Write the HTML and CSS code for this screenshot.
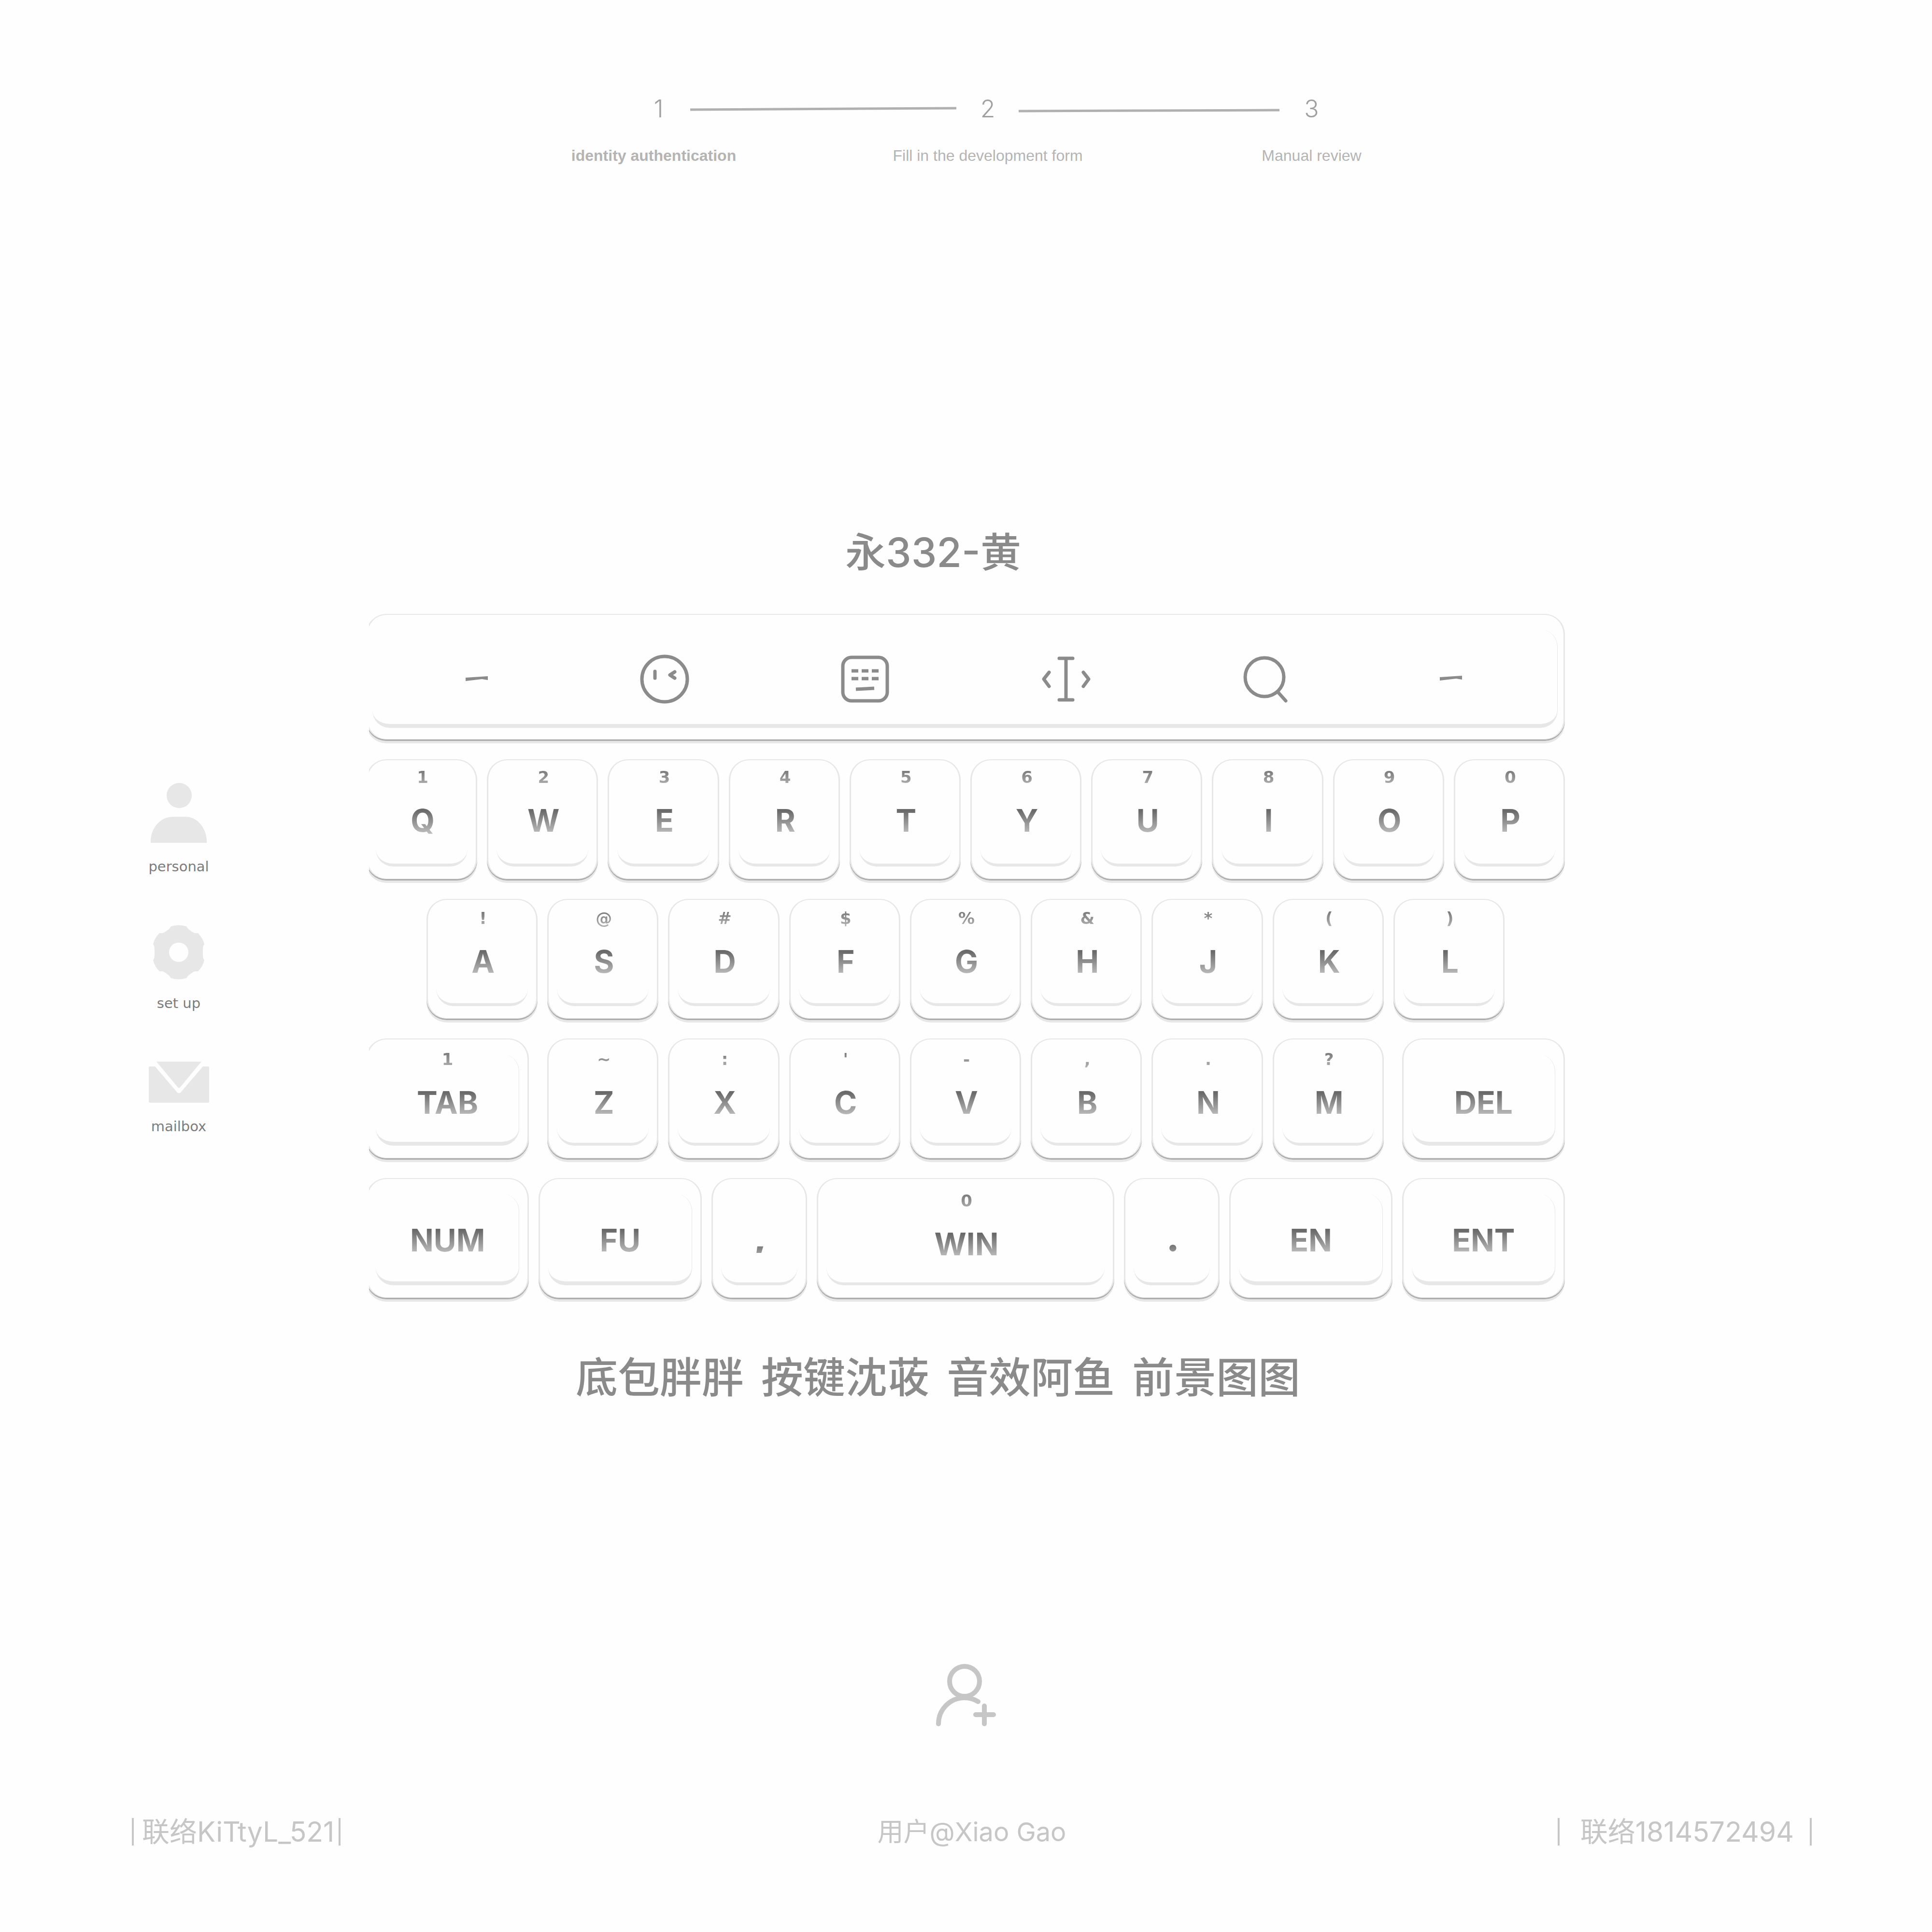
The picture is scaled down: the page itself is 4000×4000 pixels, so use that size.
FILE: index.html
```html
<!DOCTYPE html>
<html lang="zh-CN">
<head>
<meta charset="utf-8">
<title>永332-黄</title>
<link rel="stylesheet" href="styles.css">
</head>
<body>
<header class="steps">
  <span class="num num-1">1</span>
  <svg class="link link-1" viewBox="0 0 551 10" preserveAspectRatio="none"><path d="M0 7L551 4"/></svg>
  <span class="num num-2">2</span>
  <svg class="link link-2" viewBox="0 0 540 10" preserveAspectRatio="none"><path d="M0 10L540 8"/></svg>
  <span class="num num-3">3</span>
  <span class="label label-1">identity authentication</span>
  <span class="label label-2">Fill in the development form</span>
  <span class="label label-3">Manual review</span>
</header>

<main class="stage">
  <h1 class="title">永332-黄</h1>

  <nav class="side">
    <a class="side-item" href="#personal">
      <svg width="116" height="124" viewBox="0 0 116 124"><circle cx="59" cy="26" r="26"/><path d="M0 124V118C2 90 22 70 46 70H72C96 70 114 92 116 118V124Z"/></svg>
      <span>personal</span>
    </a>
    <a class="side-item" href="#setup">
      <svg width="108" height="113" viewBox="0 0 108 113"><path fill-rule="evenodd" d="M38 3Q54 -2 70 3C72 6 73 8 76 10Q81 14 87 17H94Q104 27 107 40C104 44 104 47 104 56.500C104 66 104 69 107 73Q104 86 94 96H87Q81 99 76 103C73 105 72 107 70 110Q54 115 38 110C36 107 35 105 32 103Q27 99 21 96H14Q4 86 1 73C4 69 4 66 4 56.500C4 47 4 44 1 40Q4 27 14 17H21Q27 14 32 10C35 8 36 6 38 3ZM54 36.500A20 20 0 1 0 54 76.500A20 20 0 1 0 54 36.500Z"/></svg>
      <span>set up</span>
    </a>
    <a class="side-item" href="#mailbox">
      <svg width="125" height="85" viewBox="0 0 125 85"><path d="M16 0H109L65 53Q62.500 56 60 53Z"/><path d="M2 10H13L60 65H65L112 10H123Q125 10 125 13V82Q125 85 122 85H3Q0 85 0 82V13Q0 10 2 10Z"/></svg>
      <span>mailbox</span>
    </a>
  </nav>

  <section class="keyboard" aria-label="keyboard">
    <div class="toolbar">
      <button class="tool" aria-label="previous"><svg width="46" height="102" viewBox="0 0 46 102"><path class="solid" d="M0 48L46 45V53L34 51L0 55Z"/></svg></button>
      <button class="tool" aria-label="emoji"><svg width="102" height="102" viewBox="0 0 102 102"><circle cx="51" cy="51" r="47"/><path d="M31 35V49M72 36L62 42.500L72 49"/></svg></button>
      <button class="tool" aria-label="layout"><svg width="100" height="102" viewBox="0 0 100 102"><rect x="4" y="6" width="92" height="90" rx="18"/><path class="cut" d="M22 34H36M43 34H57M64 34H78M22 50H36M43 50H57M64 50H78M31 72L69 70"/></svg></button>
      <button class="tool" aria-label="cursor"><svg width="104" height="102" viewBox="0 0 104 102"><path d="M37 8H65M51 8V94M37 94H65M16 37L5 51L16 66M87 37L98 51L87 66"/></svg></button>
      <button class="tool" aria-label="search"><svg width="92" height="102" viewBox="0 0 92 102"><circle cx="44" cy="47" r="40"/><path d="M71 77L88 96"/></svg></button>
      <button class="tool" aria-label="next"><svg width="46" height="102" viewBox="0 0 46 102"><path class="solid" d="M0 47L46 44V52L34 50L0 54Z"/></svg></button>
    </div>

    <div class="row row-top">
      <button class="key"><small>1</small><b>Q</b></button>
      <button class="key"><small>2</small><b>W</b></button>
      <button class="key"><small>3</small><b>E</b></button>
      <button class="key"><small>4</small><b>R</b></button>
      <button class="key"><small>5</small><b>T</b></button>
      <button class="key"><small>6</small><b>Y</b></button>
      <button class="key"><small>7</small><b>U</b></button>
      <button class="key"><small>8</small><b>I</b></button>
      <button class="key"><small>9</small><b>O</b></button>
      <button class="key"><small>0</small><b>P</b></button>
    </div>

    <div class="row row-home">
      <button class="key"><small>!</small><b>A</b></button>
      <button class="key"><small>@</small><b>S</b></button>
      <button class="key"><small>#</small><b>D</b></button>
      <button class="key"><small>$</small><b>F</b></button>
      <button class="key"><small>%</small><b>G</b></button>
      <button class="key"><small>&amp;</small><b>H</b></button>
      <button class="key"><small>*</small><b>J</b></button>
      <button class="key"><small>(</small><b>K</b></button>
      <button class="key"><small>)</small><b>L</b></button>
    </div>

    <div class="row row-low">
      <button class="key wide"><small>1</small><b>TAB</b></button>
      <div class="letters">
        <button class="key"><small>~</small><b>Z</b></button>
        <button class="key"><small>:</small><b>X</b></button>
        <button class="key"><small>'</small><b>C</b></button>
        <button class="key"><small>-</small><b>V</b></button>
        <button class="key"><small>,</small><b>B</b></button>
        <button class="key"><small>.</small><b>N</b></button>
        <button class="key"><small>?</small><b>M</b></button>
      </div>
      <button class="key wide"><small></small><b>DEL</b></button>
    </div>

    <div class="row row-space">
      <button class="key wide"><small></small><b>NUM</b></button>
      <button class="key wide"><small></small><b>FU</b></button>
      <button class="key mark"><small></small><b>,</b></button>
      <button class="key"><small>0</small><b>WIN</b></button>
      <button class="key mark"><small></small><b>.</b></button>
      <button class="key wide"><small></small><b>EN</b></button>
      <button class="key wide"><small></small><b>ENT</b></button>
    </div>
  </section>

  <p class="credits"><span>底包胖胖</span><span>按键沈荍</span><span>音效阿鱼</span><span>前景图图</span></p>
</main>

<button class="add-user" aria-label="add user">
  <svg width="132" height="136" viewBox="0 0 132 136"><circle cx="63" cy="39" r="31"/><path d="M9 127A54 54 0 0 1 63 73Q78 73 91 81M104 90V127M86 108H123"/></svg>
</button>

<footer class="footer">
  <span class="contact contact-left">联络KiTtyL_521</span>
  <span class="user">用户@Xiao Gao</span>
  <span class="contact contact-right">联络1814572494</span>
</footer>
</body>
</html>
```
FILE: styles.css
```css
* {
  box-sizing: border-box;
}

body {
  margin: 0;
  min-height: 100vh;
  display: flex;
  flex-direction: column;
  background: #fefefe;
  color: #8a8a8a;
  font-family: Inter, "Noto Sans CJK SC", sans-serif;
}

button {
  margin: 0;
  padding: 0;
  border: 0;
  background: none;
  font: inherit;
  color: inherit;
}

svg {
  display: block;
}

/* progress steps */
.steps {
  width: 41%;
  margin: 0 auto;
  padding-top: 193px;
  display: grid;
  grid-template-columns: 249fr 98fr 319fr 134fr 129fr 135fr 367fr 38fr 171fr;
  grid-template-rows: 64px 40px;
  row-gap: 45px;
  align-items: center;
}

.num {
  grid-row: 1;
  text-align: center;
  font-size: 50px;
  font-weight: 300;
  line-height: 64px;
  color: #a0a0a0;
}

.num-1 { grid-column: 1 / 3; padding-left: 20px; }
.num-2 { grid-column: 4 / 7; }
.num-3 { grid-column: 8 / 10; }

.link {
  grid-row: 1;
  width: 100%;
  height: 10px;
  overflow: visible;
  fill: none;
  stroke: #b0b0b0;
  stroke-width: 5;
}

.link-1 { grid-column: 2 / 5; }
.link-2 { grid-column: 6 / 9; }

.label {
  grid-row: 2;
  justify-self: center;
  white-space: nowrap;
  font: 32px/40px "Liberation Sans", sans-serif;
  color: #b4b4b4;
}

.label-1 { grid-column: 1 / 3; font-weight: 700; }
.label-2 { grid-column: 4 / 7; }
.label-3 { grid-column: 8 / 10; }

/* stage: side menu beside the keyboard */
.stage {
  margin-top: 742px;
  display: grid;
  grid-template-columns: 758fr 2482fr 760fr;
}

.title,
.credits {
  grid-column: 2;
  margin: 0;
  text-align: center;
  font-weight: 500;
  line-height: 120px;
}

.title {
  margin-bottom: 67px;
  padding-right: 134px;
  font-size: 84px;
}

.credits {
  margin-top: 106px;
  padding-right: 114px;
  display: flex;
  justify-content: center;
  gap: 36px;
  font-size: 87px;
}

.side {
  grid-column: 1;
  padding: 350px 18px 0 0;
  display: flex;
  flex-direction: column;
  align-items: center;
  gap: 101px;
}

.side-item {
  display: flex;
  flex-direction: column;
  align-items: center;
  gap: 29px;
  font: 29px/40px "DejaVu Sans", sans-serif;
  color: #7c7c7c;
  text-decoration: none;
}

.side-item svg {
  fill: #e7e7e7;
}

/* keyboard */
.keyboard {
  grid-column: 2;
  display: flex;
  flex-direction: column;
  gap: 41px;
  clip-path: inset(-20px -20px -20px 6px);
}

.toolbar,
.key {
  position: relative;
  border: 3px solid #e7e7e7;
  border-width: 2px 3px 1px;
  border-radius: 42px;
  box-shadow: 0 3px 0 #adadad, 0 8px 0 #e7e7e7;
}

.toolbar::after,
.key::after {
  content: "";
  position: absolute;
  inset: 30px 17px 25px;
  border-bottom: 6px solid #e7e7e7;
  border-radius: 36px;
  pointer-events: none;
}

.toolbar::after,
.wide::after {
  border-bottom-width: 8px;
  border-right: 1px solid #e7e7e7;
}

.toolbar {
  height: 260px;
  padding: 8px 210px 0 203px;
  display: flex;
  justify-content: space-between;
  align-items: center;
}

.toolbar::after {
  inset: 30px 12px 23px 10px;
}

.tool svg {
  fill: none;
  stroke: #8b8b8b;
  stroke-width: 7;
  stroke-linejoin: round;
  stroke-linecap: round;
}

.tool .solid {
  fill: #8b8b8b;
  stroke: none;
}

.tool .cut {
  stroke-linecap: butt;
}

.row {
  display: grid;
  gap: 20px;
  grid-auto-rows: 248px;
}

.row-top {
  grid-template-columns: repeat(10, 1fr);
}

.row-home {
  grid-template-columns: repeat(9, 1fr);
  padding: 0 125px;
}

.row-low {
  grid-template-columns: 337fr 1730fr 337fr;
  gap: 38px;
}

.letters {
  display: grid;
  grid-template-columns: repeat(7, 1fr);
  gap: 20px;
}

.row-space {
  grid-template-columns: 337fr 337fr 198fr 616fr 198fr 337fr 337fr;
}

.key {
  display: flex;
  flex-direction: column;
  align-items: center;
  padding: 15px 0 0 4px;
}

.row-home .key {
  padding-top: 18px;
}

.row-low .key {
  padding-top: 21px;
}

.row-space .key {
  padding-top: 25px;
}

.row .wide {
  padding-left: 0;
}

.key small,
.key b {
  color: transparent;
  background-clip: text;
  -webkit-background-clip: text;
}

.key small {
  height: 40px;
  font: 700 34px/40px "DejaVu Sans", sans-serif;
  background-image: linear-gradient(#7c7c7c 20%, #b0b0b0 90%);
}

.key b {
  margin-top: 36px;
  font-size: 64px;
  font-weight: 700;
  line-height: 68px;
  background-image: linear-gradient(#6a6a6a 20%, #bcbcbc 88%);
}

.row-space .wide b {
  margin-top: 28px;
}

.row-space .mark b {
  margin-top: 20px;
  font-size: 84px;
  background-image: linear-gradient(#6a6a6a 70%, #9a9a9a 100%);
}

/* page foot */
.add-user {
  align-self: center;
  margin-top: 529px;
}

.add-user svg {
  fill: none;
  stroke: #c6c6c6;
  stroke-width: 10;
  stroke-linecap: round;
}

.footer {
  margin-top: 186px;
  padding: 0 249px 179px 273px;
  display: grid;
  grid-template-columns: 1fr auto 1fr;
  font-size: 57px;
  line-height: 57px;
  color: #c6c6c6;
}

.user {
  font-size: 54px;
}

.contact {
  border: solid #c6c6c6;
  border-width: 0 4px;
}

.contact-left {
  justify-self: start;
  padding: 0 9px 0 17px;
}

.contact-right {
  justify-self: end;
  padding: 0 33px 0 43px;
}
```
